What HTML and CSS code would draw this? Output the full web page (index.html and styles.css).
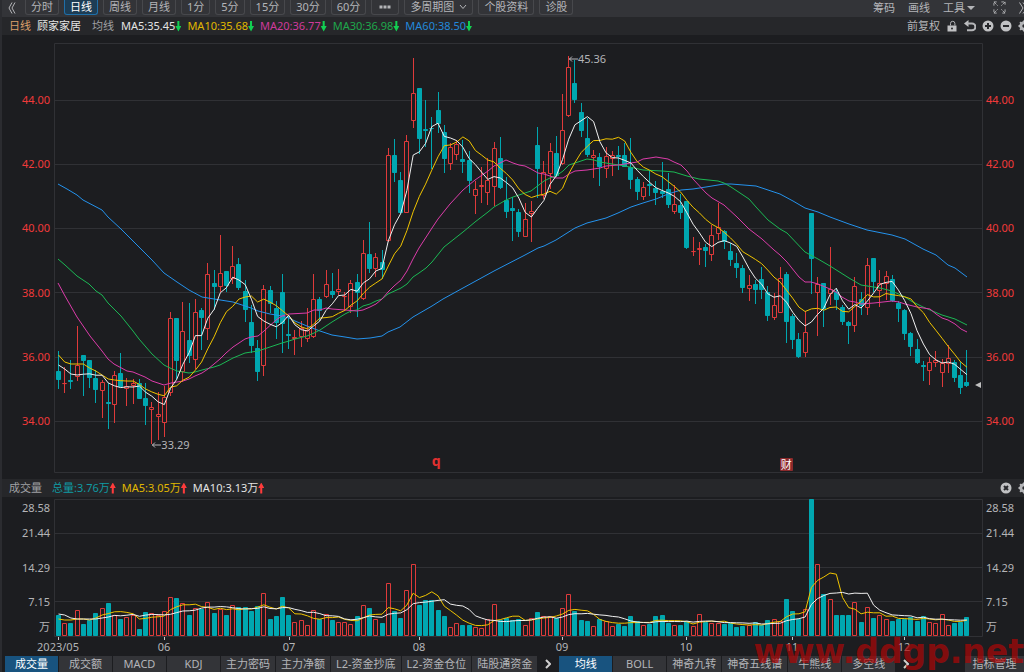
FILE: index.html
```html
<!DOCTYPE html>
<html lang="zh-CN">

<head>
    <meta charset="UTF-8">
    <meta name="viewport" content="width=device-width, initial-scale=1.0">
    <title>顾家家居 日线</title>
    <link rel="stylesheet" href="styles.css">
</head>

<body>
    <nav class="toolbar">
        <button type="button" class="plain" aria-label="收起">
            <svg class="icon-collapse" viewBox="0 0 8 12"><path d="M4 0.5L1 6l3 5.5M7 0.5L4 6l3 5.5" /></svg>
        </button>
        <div class="periods">
            <button type="button">分时</button>
            <button type="button" class="active">日线</button>
            <button type="button">周线</button>
            <button type="button">月线</button>
            <button type="button">1分</button>
            <button type="button">5分</button>
            <button type="button">15分</button>
            <button type="button">30分</button>
            <button type="button">60分</button>
            <button type="button" aria-label="更多">
                <svg class="icon-dots" viewBox="0 0 12 4"><path d="M0.5 0.5h3v3h-3zM4.5 0.5h3v3h-3zM8.5 0.5h3v3h-3z" /></svg>
            </button>
            <button type="button">多周期图
                <svg class="icon-down" viewBox="0 0 8 6"><path d="M1 1l3 3.5L7 1" /></svg>
            </button>
            <button type="button">个股资料</button>
            <button type="button">诊股</button>
        </div>
        <div class="tools">
            <button type="button" class="plain">筹码</button>
            <button type="button" class="plain">画线</button>
            <button type="button" class="plain">工具<span class="caret"></span></button>
            <button type="button" class="plain tool-full" aria-label="全屏">
                <svg class="icon-full" viewBox="0 0 14 14"><path d="M1 5V1h4M1 1l4 4M9 1h4v4M13 1L9 5M1 9v4h4M1 13l4-4M13 9v4H9M13 13L9 9" /></svg>
            </button>
            <button type="button" class="plain" aria-label="展开">
                <svg class="icon-half" viewBox="0 0 5 12"><path d="M0.5 0.5L4 6l-3.5 5.5M4 0.5L8 6l-4 5.5" /></svg>
            </button>
        </div>
    </nav>

    <div class="legend">
        <span class="day">日线</span>
        <span class="name">顾家家居</span>
        <span class="group">均线</span>
        <span class="white down">MA5:35.45</span>
        <span class="yellow down">MA10:35.68</span>
        <span class="pink down">MA20:36.77</span>
        <span class="green down">MA30:36.98</span>
        <span class="blue down">MA60:38.50</span>
        <div class="actions">
            <button type="button" class="plain">前复权</button>
            <button type="button" class="plain" aria-label="锁定">
                <svg class="icon" viewBox="0 0 12 12"><path class="solid" d="M1.500 5.500h9v6h-9z" /><path class="line" d="M4.500 5.500V3.500a2.200 2.200 0 0 1 4.400 0v2" /><circle class="hole" cx="6" cy="8.500" r="1" /></svg>
            </button>
            <button type="button" class="plain" aria-label="撤销">
                <svg class="icon" viewBox="0 0 12 12"><path class="solid" d="M0 3.500L4.500 0v7z" /><path class="line thick" d="M3 3.500h5a3.300 3.300 0 0 1 0 6.800H3" /></svg>
            </button>
            <button type="button" class="plain" aria-label="放大">
                <svg class="icon" viewBox="0 0 12 12"><circle class="solid" cx="6" cy="6" r="5.500" /><path class="mark" d="M6 3v6M3 6h6" /></svg>
            </button>
            <button type="button" class="plain" aria-label="缩小">
                <svg class="icon" viewBox="0 0 12 12"><circle class="solid" cx="6" cy="6" r="5.500" /><path class="mark" d="M3 6h6" /></svg>
            </button>
            <button type="button" class="plain" aria-label="设置">
                <svg class="icon-gear" viewBox="0 0 6 12"><circle class="gear" cx="6" cy="6" r="3.200" /><path class="teeth" d="M0.500 6H3M2.100 2.100l1.800 1.800M2.100 9.900l1.800-1.800M6 0.500V3M6 9v2.500" /></svg>
            </button>
        </div>
    </div>

    <main class="panel price">
        <div class="axis axis-left">
            <span>44.00</span><span>42.00</span><span>40.00</span><span>38.00</span><span>36.00</span><span>34.00</span>
        </div>
        <div class="plot">
            <svg id="priceChart" viewBox="54 43 928 429" preserveAspectRatio="none"></svg>
            <span class="note note-high"><svg class="arrow" viewBox="0 0 9 6"><path d="M0 3h9M3 0.500L0.500 3 3 5.500" /></svg>45.36</span>
            <span class="note note-low"><svg class="arrow" viewBox="0 0 9 6"><path d="M0 3h9M3 0.500L0.500 3 3 5.500" /></svg>33.29</span>
            <span class="event event-q">q</span>
            <span class="event event-report">财</span>
            <span class="pointer"></span>
        </div>
        <div class="axis axis-right">
            <span>44.00</span><span>42.00</span><span>40.00</span><span>38.00</span><span>36.00</span><span>34.00</span>
        </div>
    </main>

    <div class="legend volume-legend">
        <span class="group">成交量</span>
        <span class="teal up">总量:3.76万</span>
        <span class="yellow up">MA5:3.05万</span>
        <span class="white up">MA10:3.13万</span>
        <div class="actions">
            <button type="button" class="plain" aria-label="关闭">
                <svg class="icon" viewBox="0 0 12 12"><circle class="solid" cx="6" cy="6" r="5.500" /><path class="mark" d="M4 4l4 4M8 4L4 8" /></svg>
            </button>
            <button type="button" class="plain" aria-label="设置">
                <svg class="icon-gear" viewBox="0 0 6 12"><circle class="gear" cx="6" cy="6" r="3.200" /><path class="teeth" d="M0.500 6H3M2.100 2.100l1.800 1.800M2.100 9.900l1.800-1.800M6 0.500V3M6 9v2.500" /></svg>
            </button>
        </div>
    </div>

    <section class="panel volume">
        <div class="axis axis-left">
            <span>28.58</span><span>21.44</span><span>14.29</span><span>7.15</span><span>万</span>
        </div>
        <div class="plot">
            <svg id="volumeChart" viewBox="54 0 928 137" preserveAspectRatio="none"></svg>
        </div>
        <div class="axis axis-right">
            <span>28.58</span><span>21.44</span><span>14.29</span><span>7.15</span><span>万</span>
        </div>
    </section>

    <div class="months">
        <span>2023/05</span><span>06</span><span>07</span><span>08</span><span>09</span><span>10</span><span>11</span><span>12</span>
    </div>

    <footer class="tabs">
        <button type="button" class="active">成交量</button>
        <button type="button">成交额</button>
        <button type="button">MACD</button>
        <button type="button">KDJ</button>
        <button type="button">主力密码</button>
        <button type="button">主力净额</button>
        <button type="button">L2-资金抄底</button>
        <button type="button">L2-资金仓位</button>
        <button type="button">陆股通资金</button>
        <button type="button" class="next" aria-label="更多指标">
            <svg class="icon-next" viewBox="0 0 6 10"><path d="M1 1l4 4-4 4" /></svg>
        </button>
        <button type="button" class="active">均线</button>
        <button type="button">BOLL</button>
        <button type="button">神奇九转</button>
        <button type="button">神奇五线谱</button>
        <button type="button">牛熊线</button>
        <button type="button">多空线</button>
        <button type="button" class="next" aria-label="更多均线">
            <svg class="icon-next" viewBox="0 0 6 10"><path d="M1 1l4 4-4 4" /></svg>
        </button>
        <button type="button" class="manage">指标管理</button>
    </footer>

    <div class="watermark">www.ddgp.net</div>

    <script src="chart.js"></script>
</body>

</html>
```
FILE: styles.css
```css
* {
    box-sizing: border-box;
}

body {
    margin: 0;
    min-height: 100vh;
    display: flex;
    flex-direction: column;
    position: relative;
    overflow: hidden;
    border-left: 2px solid #2b2c30;
    background-color: #1c1d20;
    color: #b4b5b8;
    font-family: "Noto Sans", "Noto Sans CJK SC", sans-serif;
    font-size: 11px;
    line-height: 14px;
}

button {
    font: inherit;
    color: inherit;
    margin: 0;
    padding: 0;
    border: none;
    background: none;
    white-space: nowrap;
    cursor: pointer;
}

svg {
    display: block;
    fill: none;
    stroke: #b4b5b8;
}

.plain {
    display: flex;
    align-items: center;
}

/* top toolbar */
.toolbar {
    display: flex;
    align-items: flex-start;
    height: 17px;
    padding-left: 6px;
    background-color: #333438;
}

.toolbar .plain {
    height: 15px;
}

.periods {
    display: flex;
    gap: 5px;
    margin-left: 9px;
}

.periods button {
    display: flex;
    align-items: center;
    gap: 5px;
    height: 15px;
    padding: 0 5px;
    border: 1px solid #47484c;
    border-top: none;
    border-radius: 0 0 3px 3px;
}

.periods .active {
    color: #fff;
    background-color: #1d3d55;
    border-color: #1f6fa8;
}

.icon-collapse {
    width: 8px;
    height: 12px;
}

.icon-dots {
    width: 12px;
    height: 4px;
    margin: 0 2px;
    fill: #b4b5b8;
    stroke: none;
}

.icon-down {
    width: 8px;
    height: 6px;
}

.tools {
    display: flex;
    gap: 13px;
    margin-left: auto;
}

.caret {
    margin-left: 2px;
    border: 4px solid transparent;
    border-top-color: #b4b5b8;
    border-bottom: none;
}

.tool-full {
    margin-left: 5px;
}

.icon-full {
    width: 13px;
    height: 13px;
    stroke-dasharray: 3 1;
}

.icon-half {
    width: 5px;
    height: 12px;
}

/* indicator legends */
.legend {
    display: flex;
    align-items: center;
    gap: 6px;
    height: 18px;
    padding-left: 7px;
    background-color: #26272a;
    white-space: nowrap;
}

.legend .name {
    color: #e4e4e4;
}

.legend .day {
    color: #dba06a;
}

.legend .group {
    color: #a0a1a4;
}

.name + .group {
    margin: 0 1px 0 5px;
}

.legend .white { color: #e4e4e4; }
.legend .yellow { color: #e0b800; }
.legend .pink { color: #cf3a9c; }
.legend .green { color: #1fa84c; }
.legend .blue { color: #2389da; }
.legend .teal { color: #0f9aa2; }

.down,
.up {
    display: flex;
    align-items: center;
}

.down::after,
.up::after {
    content: "";
    width: 6px;
    height: 11px;
    background-color: #12cf52;
    clip-path: polygon(33% 0, 67% 0, 67% 50%, 100% 50%, 50% 100%, 0 50%, 33% 50%);
}

.up::after {
    background-color: #ff3b3b;
    clip-path: polygon(50% 0, 100% 50%, 67% 50%, 67% 100%, 33% 100%, 33% 50%, 0 50%);
}

.volume-legend .group {
    margin-right: 4px;
}

.actions {
    display: flex;
    align-items: center;
    gap: 6px;
    margin-left: auto;
}

.icon {
    width: 12px;
    height: 12px;
}

.icon-gear {
    width: 6px;
    height: 12px;
}

.solid {
    fill: #c0c1c3;
    stroke: none;
}

.hole {
    fill: #26272a;
    stroke: none;
}

.mark {
    stroke: #26272a;
    stroke-width: 2;
}

.thick,
.teeth {
    stroke-width: 2;
}

.gear {
    stroke-width: 3;
}

/* chart panels */
.panel {
    display: grid;
    grid-template-columns: 52px minmax(0, 1fr) 42px;
}

.price {
    flex: 1;
    padding: 8px 0 7px;
}

.volume {
    height: 139px;
    padding-top: 2px;
}

.axis {
    display: grid;
    align-items: center;
    padding: 0 4px;
}

.axis-left {
    justify-items: end;
}

.price .axis {
    grid-template-rows: 25fr repeat(6, 64fr) 19fr;
    color: #f03a3a;
}

/* empty row above the first label */
.price .axis::before {
    content: "";
}

.volume .axis {
    grid-template-rows: 17fr 34fr 34fr 34fr 17fr;
}

.plot {
    position: relative;
    min-height: 0;
}

.plot > svg {
    position: absolute;
    width: 100%;
    height: 100%;
    overflow: visible;
}

.plot > svg * {
    vector-effect: non-scaling-stroke;
}

.frame,
.gridline {
    stroke: #303135;
}

.rise {
    stroke: #df3a3a;
    fill: #1c1d20;
}

.fall {
    stroke: #00a7b0;
    fill: #00a7b0;
}

.ma { stroke-linejoin: round; }
.ma5 { stroke: #f0f0f0; }
.ma10 { stroke: #f0c400; }
.ma20 { stroke: #dc3caa; }
.ma30 { stroke: #1bb854; }
.ma60 { stroke: #2492ec; }

.note {
    position: absolute;
    display: flex;
    align-items: center;
}

.arrow {
    width: 9px;
    height: 6px;
}

.note-high {
    left: 55.5%;
    top: 2%;
}

.note-low {
    left: 10.6%;
    top: 92%;
}

.event {
    position: absolute;
    bottom: 1px;
    line-height: 13px;
}

.event-q {
    left: 40.7%;
    bottom: 5px;
    color: #e03030;
    font-size: 14px;
    font-weight: bold;
}

.event-report {
    left: 78.2%;
    padding: 0 1px;
    border-radius: 1px;
    background-color: #8c2a2c;
    color: #fff;
}

.pointer {
    position: absolute;
    right: 1px;
    top: 79%;
    border: 3px solid transparent;
    border-right: 6px solid #c0c0c0;
    border-left: none;
}

.months {
    display: grid;
    grid-template-columns: 4fr 106fr 125fr 130fr 143fr 124fr 106fr 112fr 78fr;
    height: 20px;
    padding: 0 42px 0 52px;
}

.months span {
    display: flex;
    flex-direction: column;
    align-items: center;
    width: 0;
}

.months span::before {
    content: "";
    width: 1px;
    height: 4px;
    background-color: #c8c8c8;
}

.months span:first-child {
    grid-column: 2;
}

/* indicator tabs */
.tabs {
    display: flex;
    gap: 1px;
    height: 16px;
    padding-left: 3px;
    overflow: hidden;
}

.tabs button {
    flex: none;
    min-width: 53px;
    padding: 0 5px;
    background-color: #333438;
}

.tabs .active {
    background-color: #18537f;
    color: #fff;
}

.tabs .next {
    display: flex;
    justify-content: center;
    align-items: center;
    min-width: 0;
    padding: 0 7px;
    background: none;
}

.icon-next {
    width: 6px;
    height: 10px;
    stroke: #d0d0d0;
    stroke-width: 2;
}

.tabs .manage {
    width: 59px;
    margin-left: auto;
}

.watermark {
    position: absolute;
    right: 0;
    bottom: 1px;
    color: rgba(176, 6, 6, 0.7);
    font-family: "DejaVu Sans", sans-serif;
    font-size: 33px;
    font-weight: bold;
    line-height: 38px;
    pointer-events: none;
}
```
FILE: chart.js
```js
// [rising, high, body top, body bottom, low]
const candles = [
    [0,351,371,380,389],[1,367,383,383,393],[0,360,380,382,389],[1,326,365,377,381],[0,355,355,361,396],
    [0,360,360,378,388],[0,370,378,390,403],[1,380,382,391,418],[0,383,402,404,429],[1,371,375,405,423],
    [0,353,373,387,387],[1,378,386,389,406],[1,379,383,386,404],[0,379,383,399,399],[0,383,398,406,425],
    [1,402,407,410,444],[1,392,414,417,440],[1,386,397,423,437],[1,312,318,393,396],[0,318,318,361,380],
    [1,302,331,372,382],[0,303,340,356,363],[1,299,312,360,369],[0,308,310,318,350],[1,263,274,329,340],
    [0,270,283,287,310],[1,235,273,287,292],[0,271,271,286,292],[1,246,266,279,284],[0,258,264,288,290],
    [0,280,291,310,322],[0,305,322,346,353],[0,340,348,372,381],[1,285,289,366,376],[0,286,290,304,313],
    [0,301,308,323,339],[0,274,292,324,353],[0,315,334,336,349],[1,330,337,339,355],[1,321,328,337,347],
    [1,308,330,339,342],[1,274,299,337,338],[0,297,299,311,321],[1,270,284,297,298],[0,273,291,295,298],
    [1,269,289,292,295],[1,292,296,297,311],[1,280,283,307,313],[0,274,282,293,317],[1,240,253,299,300],
    [0,222,254,269,273],[1,253,257,269,277],[0,250,262,270,279],[1,148,155,241,242],[0,139,155,173,182],
    [0,172,180,213,214],[1,135,141,213,213],[1,58,93,121,128],[0,88,88,139,154],[0,100,129,131,147],
    [0,117,128,129,169],[0,92,110,124,133],[0,125,132,159,173],[1,143,147,164,170],[1,140,144,155,160],
    [0,140,159,162,173],[0,151,160,181,193],[1,181,189,196,214],[1,167,185,187,203],[1,158,180,193,205],
    [1,142,148,187,206],[0,137,158,188,189],[0,177,200,212,218],[0,197,208,211,241],[0,209,212,232,237],
    [1,203,219,237,237],[1,201,211,214,242],[0,127,145,169,198],[1,161,172,196,199],[1,143,151,174,189],
    [0,136,153,176,177],[1,94,130,164,165],[1,56,67,116,117],[0,60,83,100,103],[0,103,112,131,137],
    [0,118,138,155,157],[1,150,155,158,178],[0,153,157,167,186],[1,147,156,169,178],[1,151,155,159,176],
    [0,146,155,157,170],[0,143,155,167,167],[0,138,167,180,189],[0,177,179,192,200],[1,182,187,197,200],
    [0,170,184,186,196],[0,181,188,193,205],[0,162,191,194,198],[0,173,189,205,208],[1,185,204,212,214],
    [0,194,205,213,219],[0,201,201,248,249],[1,237,251,251,256],[1,242,248,250,265],[0,244,247,251,267],
    [1,225,235,255,261],[1,203,227,234,240],[0,230,231,242,249],[0,243,251,260,266],[0,253,263,268,278],
    [0,265,268,288,293],[1,275,285,289,301],[0,280,284,290,304],[0,267,279,290,299],[0,286,292,316,321],
    [1,293,305,318,320],[1,267,278,313,313],[0,272,274,322,343],[0,314,316,340,349],[0,333,339,357,358],
    [1,311,332,353,357],[0,213,213,259,294],[1,277,284,293,336],[0,283,283,309,327],[1,247,289,294,305],
    [0,288,292,300,310],[0,305,307,322,325],[0,321,322,326,344],[1,277,286,326,332],[0,292,299,306,315],
    [1,258,265,308,315],[0,258,258,282,292],[1,270,283,291,307],[1,271,276,284,300],[0,275,279,301,302],
    [0,301,303,309,322],[0,309,310,334,340],[0,332,333,347,356],[0,339,349,363,364],[0,361,365,367,381],
    [1,357,362,371,385],[1,351,360,363,367],[1,359,363,373,387],[1,345,358,364,373],[0,360,362,378,382],
    [0,362,375,388,394],[0,350,382,386,387]
];

const volumes = [
    21,13,13,26,12,16,23,28,33,21,17,19,21,7,24,23,21,25,39,38,33,21,28,27,34,23,27,21,31,29,
    29,25,30,43,17,20,39,21,14,16,11,26,17,22,16,14,14,12,20,31,28,17,13,53,25,18,46,72,31,36,
    36,26,20,9,13,11,11,9,8,17,32,16,18,16,17,11,18,24,20,20,18,28,42,25,16,15,10,17,15,10,
    12,10,20,15,11,12,20,21,13,11,11,15,10,22,14,13,13,12,13,9,10,11,14,11,16,17,15,37,25,17,
    27,137,72,42,37,21,21,21,34,14,29,18,21,17,15,17,17,19,15,20,14,13,22,11,13,14,19
];

const ma20 = '58,283 65,296 77,317 90,336 102,351 108,359 114,364 127,371 133,372 145,377 152,381 164,385 171,383 183,381 189,379 195,376 202,373 208,369 214,364 220,359 226,353 233,347 245,339 251,337 258,336 264,331 276,320 282,316 289,314 307,313 314,310 320,310 326,308 332,309 345,310 357,311 363,310 370,307 376,304 382,299 388,292 394,286 401,280 407,271 413,259 419,248 432,228 438,219 450,204 463,190 475,180 488,171 494,166 500,163 506,160 513,163 519,165 525,166 531,169 538,173 544,174 550,176 556,178 563,178 569,174 575,171 587,170 600,168 606,166 618,165 631,163 637,162 643,159 650,158 656,157 668,159 674,162 681,165 687,171 693,179 706,193 712,198 724,205 737,217 749,229 762,239 774,250 780,255 787,262 799,277 805,282 811,282 818,284 830,289 836,292 842,297 849,301 855,302 861,304 874,303 892,301 899,302 905,304 917,307 930,309 936,314 942,318 948,320 955,324 961,329 967,332';
const ma30 = '58,259 65,265 77,276 83,280 89,284 96,291 102,295 108,303 121,316 133,331 139,339 152,354 164,365 170,368 177,371 183,372 189,373 195,372 202,370 214,367 220,365 233,358 245,353 258,351 270,347 282,343 289,341 295,339 307,336 314,333 320,330 332,322 345,314 351,311 357,310 363,306 370,304 376,301 382,299 388,294 401,288 407,284 413,277 419,273 426,268 432,262 444,247 463,232 475,222 488,212 494,207 506,200 513,197 531,191 544,181 550,178 556,176 563,171 569,165 581,161 587,159 594,160 600,162 612,164 625,166 643,170 662,171 674,172 687,176 699,179 718,181 724,183 731,187 743,195 749,199 756,207 768,220 780,229 787,233 805,252 818,259 830,266 849,278 861,285 880,288 892,291 905,297 911,301 923,307 930,310 942,315 955,319 961,322 967,325';
const ma60 = '58,184 67,189 77,195 83,200 102,210 108,217 121,229 133,241 145,253 152,260 164,273 177,282 189,290 202,297 214,299 233,302 245,306 251,308 258,311 270,314 282,316 289,318 295,321 307,326 320,331 332,335 345,337 357,339 370,338 382,336 388,332 400,327 413,317 432,306 443,299 463,288 494,271 525,255 538,248 544,246 550,243 556,240 575,228 587,223 606,218 618,213 631,207 643,203 656,199 668,194 681,190 693,189 706,187 724,184 731,184 756,186 768,190 780,194 793,201 805,208 818,212 830,217 849,224 867,230 892,235 905,239 923,249 936,255 948,265 955,268 967,277';

// averages that need days before the first candle
const ma5Start = [365, 369, 374, 375];
const ma10Start = [355, 362, 364, 364, 364, 368, 371, 375, 379];
const volMa5Start = [17, 16, 16, 17];
const volMa10Start = [22, 21, 18, 17, 17, 17, 17, 18, 19];

const firstX = 58.5;
const step = 6.222;
const volumeBase = 137;

function xOf(i) {
    return firstX + i * step;
}

function add(svg, tag, className, attrs) {
    const el = document.createElementNS('http://www.w3.org/2000/svg', tag);
    el.setAttribute('class', className);
    for (const key in attrs) {
        el.setAttribute(key, attrs[key]);
    }
    svg.appendChild(el);
}

function movingAverage(values, days, start) {
    return values.map((v, i) => {
        if (i < days - 1) return start[i];
        const part = values.slice(i - days + 1, i + 1);
        return part.reduce((a, b) => a + b, 0) / days;
    });
}

function toPoints(values) {
    return values.map((v, i) => xOf(i).toFixed(1) + ',' + v.toFixed(1)).join(' ');
}

function drawGrid(svg, top, height, lines) {
    lines.forEach(y => add(svg, 'line', 'gridline', { x1: 54, x2: 982, y1: y, y2: y }));
    add(svg, 'rect', 'frame', { x: 54.5, y: top + 0.5, width: 928, height: height });
}

function drawPrice() {
    const svg = document.getElementById('priceChart');
    drawGrid(svg, 43, 429, [100.5, 164.5, 228.5, 292.5, 357.5, 421.5]);

    candles.forEach(([rising, high, top, bottom, low], i) => {
        const x = Math.round(xOf(i) - 0.5) + 0.5;
        const type = rising ? 'rise' : 'fall';
        add(svg, 'line', type, { x1: x, x2: x, y1: high, y2: low });
        add(svg, 'rect', type, { x: x - 2, y: top + 0.5, width: 4, height: Math.max(bottom - top - 1, 0.1) });
    });

    const closes = candles.map(c => c[0] ? c[2] : c[3]);
    add(svg, 'polyline', 'ma ma60', { points: ma60 });
    add(svg, 'polyline', 'ma ma30', { points: ma30 });
    add(svg, 'polyline', 'ma ma20', { points: ma20 });
    add(svg, 'polyline', 'ma ma10', { points: toPoints(movingAverage(closes, 10, ma10Start)) });
    add(svg, 'polyline', 'ma ma5', { points: toPoints(movingAverage(closes, 5, ma5Start)) });
}

function drawVolume() {
    const svg = document.getElementById('volumeChart');
    drawGrid(svg, 0, 137, [34.5, 68.5, 102.5]);

    volumes.forEach((v, i) => {
        const x = Math.round(xOf(i) - 0.5) + 0.5;
        const type = candles[i][0] ? 'rise' : 'fall';
        add(svg, 'rect', type, { x: x - 2, y: volumeBase - v + 0.5, width: 4, height: v - 1 });
    });

    const flip = v => volumeBase - v;
    add(svg, 'polyline', 'ma ma10', { points: toPoints(movingAverage(volumes, 5, volMa5Start).map(flip)) });
    add(svg, 'polyline', 'ma ma5', { points: toPoints(movingAverage(volumes, 10, volMa10Start).map(flip)) });
}

drawPrice();
drawVolume();
```
